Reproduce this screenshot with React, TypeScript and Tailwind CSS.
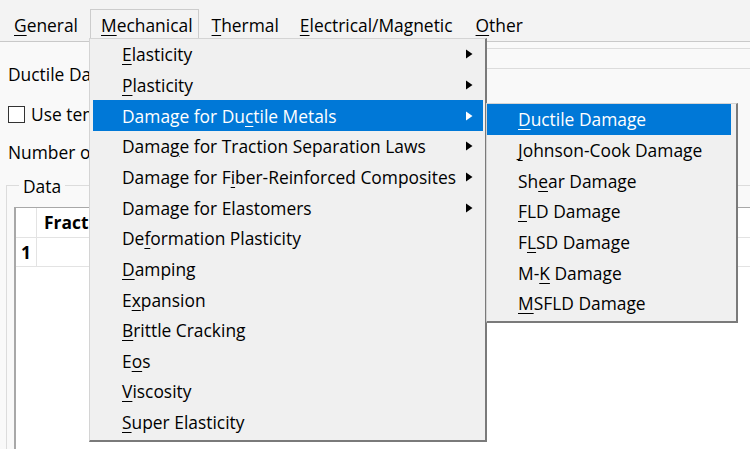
import React from 'react';

type Item = { pre: string; key: string; post: string; sub?: boolean };

const mainItems: Item[] = [
    { pre: '', key: 'E', post: 'lasticity', sub: true },
    { pre: '', key: 'P', post: 'lasticity', sub: true },
    { pre: 'Damage for Du', key: 'c', post: 'tile Metals', sub: true },
    { pre: 'Dama', key: 'g', post: 'e for Traction Separation Laws', sub: true },
    { pre: 'Damage for F', key: 'i', post: 'ber-Reinforced Composites', sub: true },
    { pre: 'Damage for Elastomers', key: '', post: '', sub: true },
    { pre: 'De', key: 'f', post: 'ormation Plasticity' },
    { pre: '', key: 'D', post: 'amping' },
    { pre: 'E', key: 'x', post: 'pansion' },
    { pre: '', key: 'B', post: 'rittle Cracking' },
    { pre: 'E', key: 'o', post: 's' },
    { pre: '', key: 'V', post: 'iscosity' },
    { pre: '', key: 'S', post: 'uper Elasticity' },
];

const subItems: Item[] = [
    { pre: '', key: 'D', post: 'uctile Damage' },
    { pre: '', key: 'J', post: 'ohnson-Cook Damage' },
    { pre: 'Sh', key: 'e', post: 'ar Damage' },
    { pre: '', key: 'F', post: 'LD Damage' },
    { pre: 'F', key: 'L', post: 'SD Damage' },
    { pre: 'M-', key: 'K', post: ' Damage' },
    { pre: '', key: 'M', post: 'SFLD Damage' },
];

const Label: React.FC<{ item: Item }> = ({ item }) => (
    <span className="whitespace-pre">
        {item.pre}
        {item.key && <span className="underline underline-offset-[3px]">{item.key}</span>}
        {item.post}
    </span>
);

const Arrow: React.FC<{ active?: boolean }> = ({ active }) => (
    <svg width="8" height="10" viewBox="0 0 8 10" className={active ? 'fill-white' : 'fill-black'}>
        <path d="M1 0.5 L7.5 5 L1 9.5 Z" />
    </svg>
);

const MenuBarItem: React.FC<{ item: Item; open?: boolean; className?: string }> = ({ item, open, className }) => (
    <div
        className={`h-[32px] flex items-center pl-[10px] pr-[5px] border ${open ? 'border-b-0 border-[#cccccc] bg-[#f3f3f3]' : 'border-transparent'} ${className ?? ''}`}
    >
        <Label item={item} />
    </div>
);

const App: React.FC = () => {
    return (
        <div
            className="relative w-[750px] h-[449px] overflow-hidden bg-[#f9f9f9] text-[17.4px] text-black"
            style={{ fontFamily: '"Open Sans", "Noto Sans", sans-serif' }}
        >
            {/* menu bar */}
            <div className="h-[42px] bg-[#f3f3f3] flex items-end pl-[3px] border-b border-[#c9c9c9]">
                <MenuBarItem item={{ pre: '', key: 'G', post: 'eneral' }} />
                <MenuBarItem item={{ pre: '', key: 'M', post: 'echanical' }} open className="ml-[6px]" />
                <MenuBarItem item={{ pre: '', key: 'T', post: 'hermal' }} className="ml-[2px]" />
                <MenuBarItem item={{ pre: '', key: 'E', post: 'lectrical/Magnetic' }} className="ml-[4px]" />
                <MenuBarItem item={{ pre: '', key: 'O', post: 'ther' }} className="ml-[6px]" />
            </div>

            {/* panel behind the menus */}
            <div className="h-[27px] pt-[6px] flex justify-end">
                <div className="w-[420px] h-[21px] border-y border-[#dcdcdc]" />
            </div>
            <div className="px-[8px]">
                <div className="h-[22px] flex items-center -mt-[6px]">Ductile Damage</div>
                <div className="h-[22px] flex items-center gap-[6px] mt-[18px]">
                    <div className="w-[17px] h-[17px] border border-[#333333] bg-white" />
                    <span>Use temperature-dependent data</span>
                </div>
                <div className="h-[22px] flex items-center mt-[16px]">Number of field variables:</div>
            </div>

            {/* Data group box */}
            <div className="absolute left-[6px] top-[185px] w-[760px] h-[280px] border-l border-t border-[#dcdcdc]">
                <div className="absolute left-[12px] -top-[12px] px-[4px] bg-[#f9f9f9] leading-[24px]">Data</div>
                <div className="absolute left-[7px] top-[21px] w-[760px] h-[280px] border-l-2 border-t border-[#a8a8a8] bg-white">
                    <div className="flex h-[30px] border-b border-[#e3e3e3]">
                        <div className="w-[21px] border-r border-[#e3e3e3]" />
                        <div className="pl-[7px] flex items-center font-bold">Fracture Strain</div>
                    </div>
                    <div className="flex h-[29px] border-b border-[#e3e3e3]">
                        <div className="w-[21px] border-r border-[#e3e3e3] flex items-center justify-center font-bold">1</div>
                        <div />
                    </div>
                </div>
            </div>

            {/* main dropdown */}
            <div className="absolute left-[89px] top-[38px] w-[398px] h-[404px] bg-[#f0f0f0] border-l border-t border-[#d4d4d4] border-r-2 border-b-2 border-r-[#7a7a7a] border-b-[#7a7a7a] pl-[3px] pr-[2px]">
                {mainItems.map((item, i) => {
                    const active = i === 2;
                    return (
                        <div
                            key={i}
                            className={`h-[30.67px] flex items-center justify-between pl-[29px] pr-[10px] ${active ? 'bg-[#0078d7] text-white' : ''}`}
                        >
                            <Label item={item} />
                            {item.sub && <Arrow active={active} />}
                        </div>
                    );
                })}
            </div>

            {/* sub menu */}
            <div className="absolute left-[486px] top-[103px] w-[252px] h-[220px] bg-[#f0f0f0] border-l border-t border-[#d4d4d4] border-r-2 border-b-2 border-r-[#7a7a7a] border-b-[#7a7a7a] pr-[5px]">
                {subItems.map((item, i) => {
                    const active = i === 0;
                    return (
                        <div
                            key={i}
                            className={`h-[30.67px] flex items-center pl-[31px] ${active ? 'bg-[#0078d7] text-white' : ''}`}
                        >
                            <Label item={item} />
                        </div>
                    );
                })}
            </div>
        </div>
    );
};

export default App;
